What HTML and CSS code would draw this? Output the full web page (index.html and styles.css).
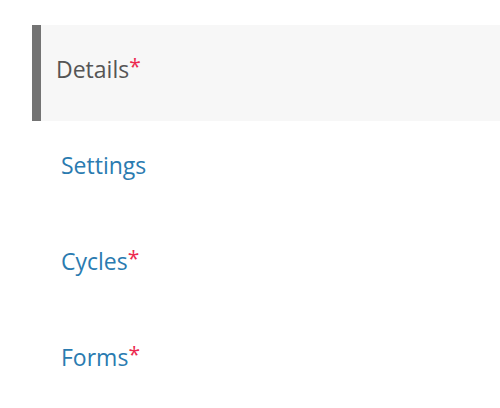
FILE: index.html
```html
<!DOCTYPE html>
<html>
<head>
<meta charset="utf-8">
<link rel="stylesheet" href="styles.css">
</head>
<body>
<nav class="steps">
  <div class="step step-active"><span class="label">Details</span><span class="req">*</span></div>
  <div class="step"><span class="label">Settings</span></div>
  <div class="step"><span class="label">Cycles</span><span class="req">*</span></div>
  <div class="step"><span class="label">Forms</span><span class="req">*</span></div>
</nav>
</body>
</html>
```
FILE: styles.css
```css
html, body {
  margin: 0;
  padding: 0;
  background: #ffffff;
}
body {
  font-family: "Open Sans", "Noto Sans", sans-serif;
  width: 500px;
  height: 408px;
  overflow: hidden;
}
.steps {
  display: flex;
  flex-direction: column;
  margin: 25px 0 0 32px;
}
.step {
  box-sizing: border-box;
  height: 96px;
  display: flex;
  align-items: center;
  padding: 0 0 9px 29px;
  font-size: 23px;
  line-height: 30px;
  color: #2a7bb0;
}
.step-active {
  border-left: 9px solid #737373;
  padding-left: 15px;
  background: #f7f7f7;
  color: #555555;
}
.req {
  color: #ec2a4f;
  font-size: 21px;
  margin-top: -5px;
}
```
